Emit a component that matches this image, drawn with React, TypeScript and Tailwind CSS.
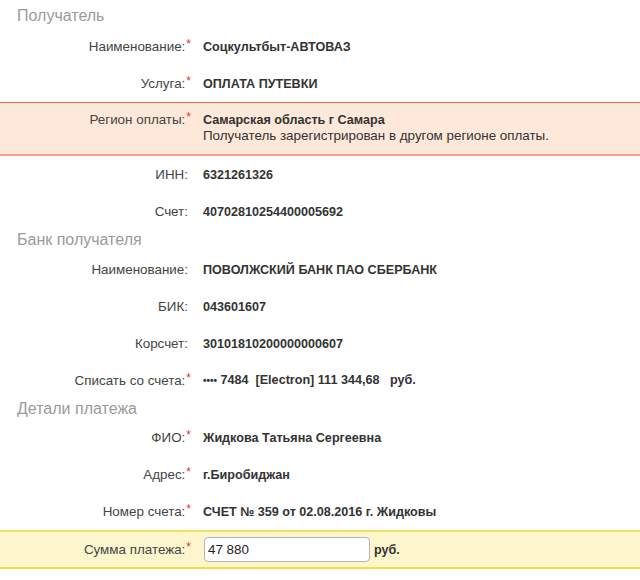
import React from "react";

type RowProps = {
  label: string;
  req?: boolean;
  children: React.ReactNode;
};

const Star = () => <span className="text-[#e5322d] text-[12px] relative -top-[3px] ml-[1px]">*</span>;

const Row = ({ label, req, children }: RowProps) => (
  <div className="flex items-center h-[37px]">
    <div className={`w-[191px] shrink-0 text-right text-[#444] text-[13.4px] ${req ? "" : "pr-[3px]"}`}>
      {label}:{req && <Star />}
    </div>
    <div className="ml-[12px] font-bold text-[#333] text-[12.6px]">{children}</div>
  </div>
);

const Section = ({ title, className }: { title: string; className: string }) => (
  <div className={`${className} pl-[17px] text-[16px] leading-[20px] text-[#9a9a9a]`}>{title}</div>
);

export default function App() {
  return (
    <div className="w-[640px] h-[580px] bg-white text-[13px] leading-[16px] font-['Liberation_Sans',Arial,sans-serif] overflow-hidden">
      <Section title="Получатель" className="h-[28px] pt-[6px]" />
      <Row label="Наименование" req>Соцкультбыт-АВТОВАЗ</Row>
      <Row label="Услуга" req>ОПЛАТА ПУТЕВКИ</Row>

      <div className="flex bg-[#fde8d9] border-t border-t-[#f26b3c] border-b-2 border-b-[#f3a184] pt-[9px] pb-[10px]">
        <div className="w-[191px] shrink-0 text-right text-[#444] text-[13.4px]">
          Регион оплаты:<Star />
        </div>
        <div className="ml-[12px] text-[#333]">
          <div className="font-bold text-[12.6px]">Самарская область г Самара</div>
          <div className="text-[13.4px]">Получатель зарегистрирован в другом регионе оплаты.</div>
        </div>
      </div>

      <Row label="ИНН">6321261326</Row>
      <Row label="Счет">40702810254400005692</Row>

      <Section title="Банк получателя" className="h-[21px]" />
      <Row label="Наименование">ПОВОЛЖСКИЙ БАНК ПАО СБЕРБАНК</Row>
      <Row label="БИК">043601607</Row>
      <Row label="Корсчет">30101810200000000607</Row>
      <Row label="Списать со счета" req>
        <span className="whitespace-pre">
          <span className="text-[10px]">••••</span> 7484  [Electron] 111 344,68   руб.
        </span>
      </Row>

      <Section title="Детали платежа" className="h-[20px]" />
      <Row label="ФИО" req>Жидкова Татьяна Сергеевна</Row>
      <Row label="Адрес" req>г.Биробиджан</Row>
      <Row label="Номер счета" req>СЧЕТ № 359 от 02.08.2016 г. Жидковы</Row>

      <div className="flex items-center h-[39px] bg-[#fdf6cd] border-t-2 border-t-[#f9df64] border-b-2 border-b-[#f9d84a]">
        <div className="w-[191px] shrink-0 text-right text-[#444] text-[13.4px]">
          Сумма платежа:<Star />
        </div>
        <input
          className="ml-[13px] w-[166px] h-[25px] bg-white border border-[#b5b5b5] rounded-[4px] px-[3px] text-[13.4px] text-[#222] outline-none"
          defaultValue="47 880"
        />
        <span className="ml-[4px] font-bold text-[#333] text-[12.6px]">руб.</span>
      </div>
    </div>
  );
}
